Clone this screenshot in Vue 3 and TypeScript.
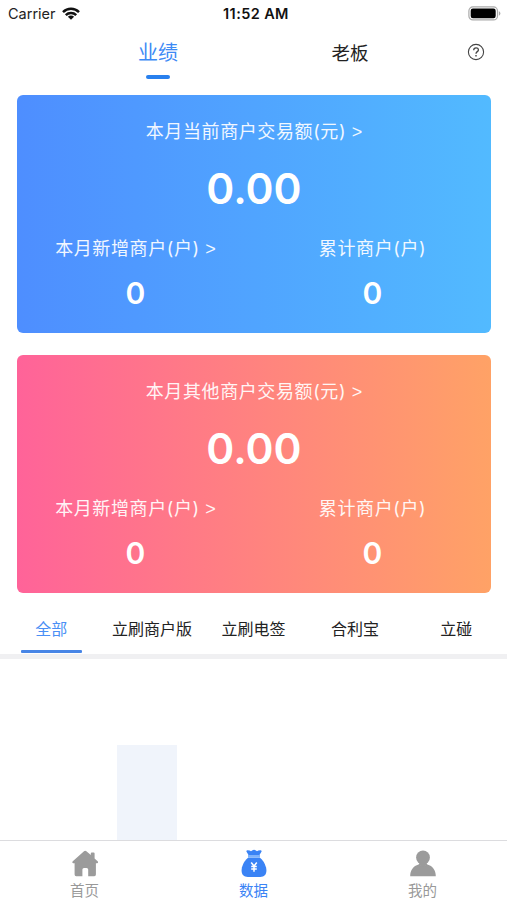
<script setup lang="ts">
interface Card {
  theme: string
  title: string
  amount: string
  added: string
  total: string
}

const cards: Card[] = [
  { theme: 'blue', title: '本月当前商户交易额(元)', amount: '0.00', added: '0', total: '0' },
  { theme: 'pink', title: '本月其他商户交易额(元)', amount: '0.00', added: '0', total: '0' },
]
const tabs: string[] = ['全部', '立刷商户版', '立刷电签', '合利宝', '立碰']
</script>

<template>
  <div class="screen">
    <header class="status">
      <div class="carrier">
        <span>Carrier</span>
        <svg width="18" height="13" viewBox="0 0 18 13" fill="none" stroke="#111" stroke-width="2.5">
          <path d="M1 5.1A11.5 11.5 0 0 1 17 5.1" />
          <path d="M3.8 8.1A7.4 7.4 0 0 1 14.2 8.1" />
          <path d="M9 12.7L5.9 9.7A4.4 4.4 0 0 1 12.1 9.7Z" fill="#111" stroke="none" />
        </svg>
      </div>
      <div class="clock">11:52 AM</div>
      <div class="battery">
        <svg width="33" height="15" viewBox="0 0 33 15">
          <rect x="0.9" y="0.9" width="28.6" height="13" rx="4" fill="#fff" stroke="#aaa" stroke-width="1.2" />
          <rect x="2.7" y="2.6" width="25" height="9.6" rx="2.2" fill="#000" />
          <path d="M30.9 5.3q1.5.6 1.5 2.2t-1.5 2.2z" fill="#aaa" />
        </svg>
      </div>
    </header>

    <nav class="top">
      <div class="top-item active"><span>业绩</span></div>
      <div class="top-item"><span>老板</span></div>
      <svg class="help" width="18" height="18" viewBox="0 0 18 18" fill="none" stroke="#444" stroke-width="1.1">
        <circle cx="9" cy="9" r="7.6" />
        <path d="M6.7 7.2C6.7 4 11.4 4.1 11.4 6.9C11.4 8.7 9 8.6 9 10.7" stroke-width="1.3" />
        <path d="M9 11.9v1.5" stroke-width="1.4" />
      </svg>
    </nav>

    <main class="cards">
      <section v-for="card in cards" :key="card.theme" class="card" :class="card.theme">
        <div class="label">{{ card.title }} <span class="more">&gt;</span></div>
        <div class="amount">{{ card.amount }}</div>
        <div class="stats">
          <div class="stat">
            <div class="label">本月新增商户(户) <span class="more">&gt;</span></div>
            <div class="count">{{ card.added }}</div>
          </div>
          <div class="stat">
            <div class="label">累计商户(户)</div>
            <div class="count">{{ card.total }}</div>
          </div>
        </div>
      </section>
    </main>

    <nav class="tabs">
      <div v-for="(tab, i) in tabs" :key="tab" class="tab" :class="{ active: i === 0 }">{{ tab }}</div>
    </nav>

    <div class="chart"><div class="bar"></div></div>

    <footer class="tabbar">
      <div class="nav-item">
        <svg width="28" height="28" viewBox="0 0 28 28" fill="#9b9b9b">
          <path d="M13 2.2Q14.2 1.2 15.4 2.2L19.8 6.1V4.6Q19.8 3.6 20.8 3.6H22.6Q23.6 3.6 23.6 4.6V9.5L26.9 12.5Q27.6 14.2 26.2 14.2H24.9V25.6Q24.9 27.2 23.3 27.2H17.2V20.6Q17.2 19 15.6 19H13Q11.4 19 11.4 20.6V27.2H5.2Q3.6 27.2 3.6 25.6V14.2H2.2Q.8 14.2 1.5 12.5Z" />
        </svg>
        <span>首页</span>
      </div>
      <div class="nav-item active">
        <svg width="28" height="28" viewBox="0 0 28 28">
          <path d="M8.5 6L6.4 2.5Q6.2 1.2 7.8 1.3Q10 1.3 11 2.2Q14-.8 17 2.2Q18 1.3 20.2 1.3Q21.8 1.2 21.6 2.5L19.5 6Z" fill="#3a83f5" />
          <path d="M8.3 8.4H19.7Q24.3 12 26 18.2C27.4 24.6 25 28 20.2 28H7.8C3 28 .6 24.6 2 18.2Q3.7 12 8.3 8.4Z" fill="#3a83f5" />
          <path d="M8 7.2H20" stroke="#80b3fb" stroke-width="2.4" />
          <path d="M11.2 13.6L14 17L16.8 13.6M14 17V22.8M11.2 17.6H16.8M11.2 20.1H16.8" fill="none" stroke="#fff" stroke-width="1.5" />
        </svg>
        <span>数据</span>
      </div>
      <div class="nav-item">
        <svg width="28" height="28" viewBox="0 0 28 28" fill="#9b9b9b">
          <circle cx="14" cy="8.5" r="6.9" />
          <path d="M1.2 27.2C1.2 21.2 4.3 17 9.6 15.5Q14 18.2 18.4 15.5C23.7 17 26.8 21.2 26.8 27.2Z" />
          <path d="M9.6 15.8L11 13H17L18.4 15.8L14 18.5Z" />
        </svg>
        <span>我的</span>
      </div>
    </footer>
  </div>
</template>

<style>
body {
  margin: 0;
  background: #fff;
}
</style>

<style scoped>
.screen {
  box-sizing: border-box;
  width: 507px;
  height: 900px;
  display: flex;
  flex-direction: column;
  overflow: hidden;
  background: #fff;
  color: #222;
  font-family: Inter, "Noto Sans CJK SC", sans-serif;
  white-space: nowrap;
}
.status {
  height: 27px;
  flex: none;
  display: grid;
  grid-template-columns: 1fr 1fr 1fr;
  align-items: center;
  padding: 0 6px 0 8px;
  font-size: 14.5px;
}
.carrier {
  display: flex;
  align-items: center;
  gap: 6px;
}
.clock {
  padding-left: 3px;
  text-align: center;
  font-weight: 600;
  color: #111;
  letter-spacing: 0.4px;
}
.battery {
  display: flex;
  justify-content: flex-end;
}
.top {
  height: 68px;
  flex: none;
  display: grid;
  grid-template-columns: 192px 192px 1fr;
  padding-left: 62px;
}
.top-item {
  display: flex;
  flex-direction: column;
  align-items: center;
  font-size: 18.5px;
  line-height: 52px;
}
.top-item.active {
  font-size: 20px;
  color: #3d8af5;
}
.top-item.active::after {
  content: "";
  width: 24px;
  height: 4px;
  margin-top: -4px;
  border-radius: 2px;
  background: #2880ee;
}
.help {
  margin: 16px 0 0 21px;
}
.cards {
  flex: none;
  display: flex;
  flex-direction: column;
  gap: 22px;
  padding: 0 16px 0 17px;
}
.card {
  box-sizing: border-box;
  height: 238px;
  padding-top: 23px;
  border-radius: 6px;
  color: #fff;
  text-align: center;
}
.blue {
  background: linear-gradient(90deg, #4e8eff, #52baff);
}
.pink {
  background: linear-gradient(90deg, #ff6399, #ffa266);
}
.label {
  font-size: 18px;
  line-height: 28px;
  letter-spacing: 0.6px;
  opacity: 0.92;
}
.more {
  font-family: "Liberation Sans", sans-serif;
  letter-spacing: 0;
}
.amount {
  margin-top: 17px;
  font-size: 42.5px;
  line-height: 52px;
  font-weight: 600;
}
.stats {
  display: grid;
  grid-template-columns: 1fr 1fr;
  margin-top: 20px;
}
.count {
  margin-top: 11px;
  font-size: 30px;
  line-height: 38px;
  font-weight: 600;
}
.tabs {
  box-sizing: border-box;
  height: 66px;
  flex: none;
  display: grid;
  grid-template-columns: repeat(5, 1fr);
  padding-top: 6px;
  border-bottom: 5px solid #f0f0f2;
}
.tab {
  display: flex;
  flex-direction: column;
  align-items: center;
  font-size: 16px;
  line-height: 60px;
}
.tab.active {
  padding-left: 1px;
  color: #4a8ff5;
}
.tab.active::after {
  content: "";
  width: 61px;
  height: 3px;
  margin-top: -9px;
  border-radius: 1px;
  background: #4785e6;
}
.chart {
  flex: 1;
  display: flex;
  align-items: flex-end;
  padding-left: 117px;
}
.bar {
  width: 60px;
  height: 95px;
  background: #f0f4fb;
}
.tabbar {
  box-sizing: border-box;
  height: 60px;
  flex: none;
  display: grid;
  grid-template-columns: repeat(3, 1fr);
  border-top: 1px solid #dcdcdf;
}
.nav-item {
  display: flex;
  flex-direction: column;
  align-items: center;
  padding-top: 8px;
  color: #999;
  font-size: 14.5px;
  line-height: 28px;
}
.nav-item svg {
  flex: none;
}
.nav-item.active {
  color: #3a83f5;
}
</style>
